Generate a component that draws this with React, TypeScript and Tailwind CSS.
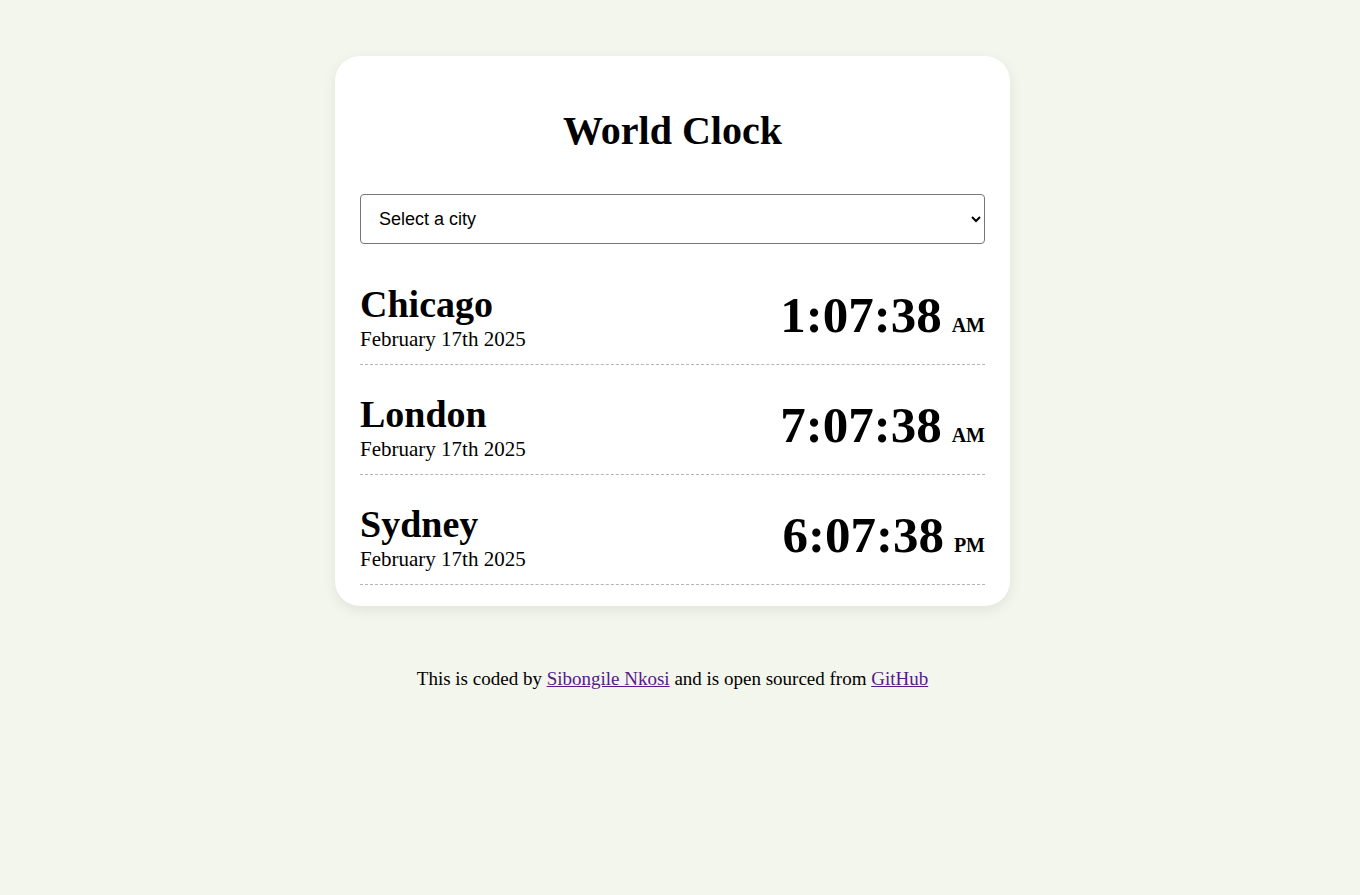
import { useState } from "react";

type CityTime = {
    name: string;
    date: string;
    time: string;
    meridiem: string;
};

// Fixed snapshot of the clock so the picture stays the same
const cities: CityTime[] = [
    { name: "Chicago", date: "February 17th 2025", time: "1:07:38", meridiem: "AM" },
    { name: "London", date: "February 17th 2025", time: "7:07:38", meridiem: "AM" },
    { name: "Sydney", date: "February 17th 2025", time: "6:07:38", meridiem: "PM" },
];

function CityRow({ city }: { city: CityTime }) {
    return (
        <div className="flex items-center justify-between border-b border-dashed border-[#b5b5b5] pt-[25px] pb-[14px]">
            <div>
                <h2 className="text-[38px] font-bold leading-[48px]">{city.name}</h2>
                <div className="text-[21px] leading-[22px]">{city.date}</div>
            </div>
            <div className="flex items-baseline">
                <span className="text-[51px] font-bold leading-[56px]">{city.time}</span>
                <span className="ml-[10px] text-[20px] font-bold">{city.meridiem}</span>
            </div>
        </div>
    );
}

export default function App() {
    const [selected, setSelected] = useState("");

    return (
        <div className="min-h-[895px] bg-[#f3f6ec] pt-[56px] font-['Liberation_Serif',serif] text-black">
            {/* page centred as if a 15px scrollbar takes the right edge */}
            <div className="w-[1345px]">
                <div className="mx-auto w-[675px] rounded-[25px] bg-white px-[25px] pt-[51px] pb-[21px] shadow-[0_4px_14px_rgba(0,0,0,0.08)]">
                    <h1 className="text-center text-[40px] font-bold leading-[48px]">World Clock</h1>

                    <select
                        value={selected}
                        onChange={(e) => setSelected(e.target.value)}
                        className="mt-[39px] h-[50px] w-full rounded-[4px] border border-[#767676] bg-white px-[14px] font-['Liberation_Sans',Arial,sans-serif] text-[18px] text-black"
                    >
                        <option value="">Select a city</option>
                        <option value="Europe/Paris">Paris</option>
                        <option value="Asia/Tokyo">Tokyo</option>
                        <option value="America/New_York">New York</option>
                    </select>

                    <div className="mt-[11px]">
                        {cities.map((city) => (
                            <CityRow key={city.name} city={city} />
                        ))}
                    </div>
                </div>

                <p className="mt-[59px] text-center text-[19px]">
                    This is coded by{" "}
                    <a href="#" className="text-[#551a8b] underline">
                        Sibongile Nkosi
                    </a>{" "}
                    and is open sourced from{" "}
                    <a href="#" className="text-[#551a8b] underline">
                        GitHub
                    </a>
                </p>
            </div>
        </div>
    );
}
